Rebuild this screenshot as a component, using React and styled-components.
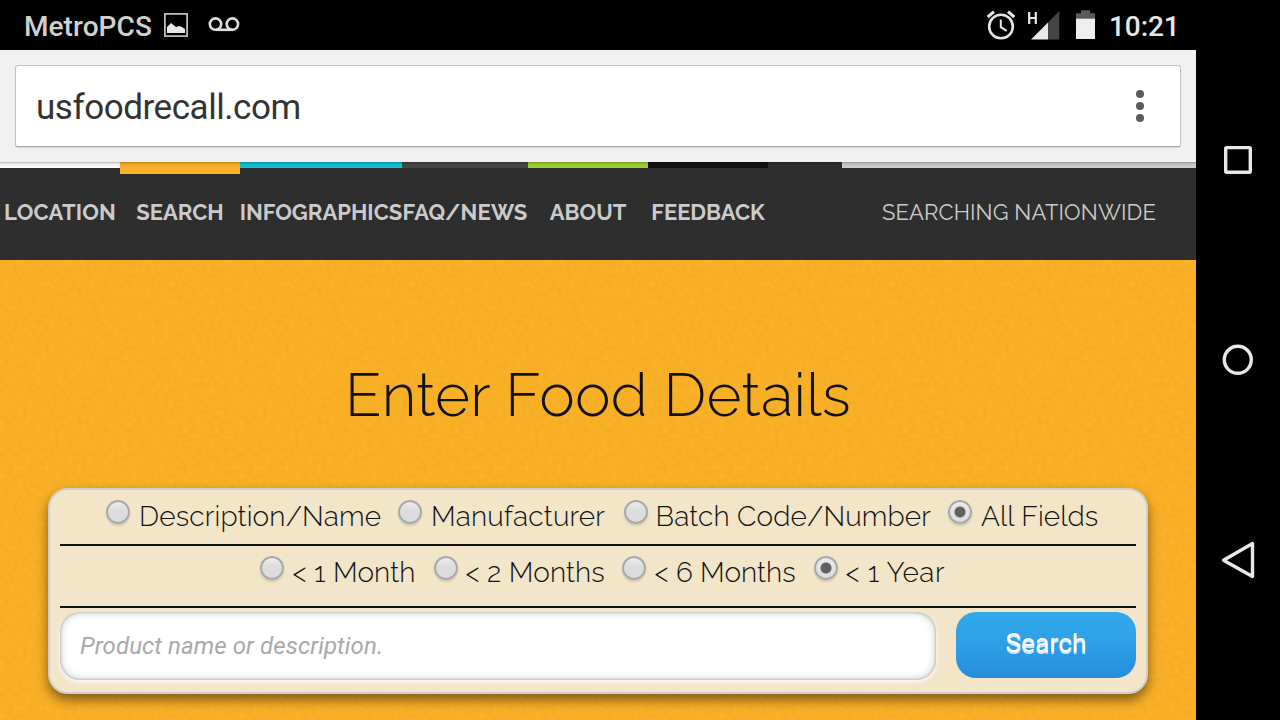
import React from "react";
import styled, { createGlobalStyle, css } from "styled-components";

const GlobalStyle = createGlobalStyle`
  *, *::before, *::after { box-sizing: border-box; }
  html, body { margin: 0; padding: 0; background: #000; overflow: hidden; }
`;

const raleway = `Raleway, Lato, "Open Sans", sans-serif`;
const roboto = `Roboto, "Noto Sans", sans-serif`;

const paper = `url("data:image/svg+xml,%3Csvg xmlns='http://www.w3.org/2000/svg' width='240' height='240'%3E%3Cfilter id='n'%3E%3CfeTurbulence type='fractalNoise' baseFrequency='0.22' numOctaves='3' stitchTiles='stitch'/%3E%3CfeColorMatrix values='0 0 0 0 0.45 0 0 0 0 0.25 0 0 0 0 0 0.2 0 0 0 -0.055'/%3E%3C/filter%3E%3Crect width='240' height='240' filter='url(%23n)'/%3E%3C/svg%3E")`;

const Device = styled.div`
  display: flex;
  width: 1280px;
  height: 720px;
  background: #000;
  overflow: hidden;
`;

const Screen = styled.div`
  display: flex;
  flex-direction: column;
  width: 1196px;
  height: 720px;
`;

const StatusBar = styled.header`
  display: flex;
  align-items: center;
  flex: 0 0 50px;
  height: 50px;
  padding: 0 8px 0 24px;
  color: #e6e6e6;
  font: 500 28px/46px ${roboto};
  background: #000;
`;

const Carrier = styled.span`
  flex: none;
  width: 139px;
  padding-top: 4px;
  color: #d0d0d0;
  letter-spacing: 0.07px;
  white-space: nowrap;
`;

const Clock = styled.span`
  flex: none;
  width: 70px;
  padding-top: 4px;
  letter-spacing: -0.1px;
  white-space: nowrap;
`;

const StatusIcon = styled.svg`
  display: block;
  flex: none;
  margin-left: ${(p) => p.$before || 0}px;
  margin-right: ${(p) => p.$after || 0}px;
`;

const Toolbar = styled.div`
  flex: 0 0 112px;
  padding: 15px 15px 0;
  background: #f1f1f1;
`;

const UrlBox = styled.div`
  display: flex;
  justify-content: space-between;
  align-items: center;
  height: 82px;
  padding: 2px 36px 0 20px;
  border: 1px solid #c2c2c2;
  border-bottom-color: #a9a9a9;
  border-radius: 3px;
  background: #fff;
  box-shadow: 0 1px 1px rgba(0, 0, 0, 0.12);
  color: #333;
  font: 400 35px/80px ${roboto};
  letter-spacing: -0.45px;
`;

const Url = styled.span`
  padding-top: 2px;
`;

const Menu = styled.div`
  display: flex;
  flex-direction: column;
  gap: 4px;
  padding-bottom: 2px;
`;

const Dot = styled.i`
  width: 8px;
  height: 8px;
  border-radius: 50%;
  background: #5b5b5b;
`;

const Nav = styled.nav`
  position: relative;
  display: flex;
  flex: 0 0 98px;
  background: #2e2e2e;
  color: #cbcbcb;
  font: 700 22px/88px ${raleway};

  &::before {
    content: "";
    position: absolute;
    inset: 0 0 auto;
    height: 6px;
    background: linear-gradient(rgba(0, 0, 0, 0.28), rgba(0, 0, 0, 0.06) 35%, rgba(0, 0, 0, 0) 100%);
  }
`;

const NavItem = styled.a`
  display: flex;
  justify-content: center;
  width: ${(p) => p.$width}px;
  height: 98px;
  padding-top: ${(p) => (p.$active ? 0 : 6)}px;
  border-top: ${(p) => (p.$active ? 12 : 6)}px solid ${(p) => p.$color};
  line-height: 77px;
  letter-spacing: ${(p) => p.$spacing || 0}px;
  white-space: nowrap;
`;

const NavNote = styled.span`
  flex: 1;
  padding: 6px 40px 0 0;
  border-top: 6px solid #cecece;
  text-align: right;
  font-weight: 400;
  line-height: 77px;
  letter-spacing: 0.13px;
`;

const Main = styled.main`
  flex: 1;
  padding: 93px 48px 0;
  background: ${paper}, #fbb128;
`;

const Title = styled.h1`
  height: 135px;
  margin: 0;
  color: #111;
  text-align: center;
  font: 300 60px/84px ${raleway};
  letter-spacing: 0.25px;
`;

const Form = styled.form`
  height: 206px;
  padding: 0 10px;
  border: 2px solid #cfcfcf;
  border-radius: 20px;
  background: #f3e5c8;
  box-shadow: 0 6px 12px rgba(0, 0, 0, 0.48);
`;

const OptionRow = styled.div`
  display: flex;
  height: ${(p) => p.$height}px;
  padding: 10px 0 0 ${(p) => p.$indent}px;
  border-bottom: 2px solid #111;
`;

const Option = styled.label`
  display: flex;
  flex: none;
  gap: ${(p) => p.$gap}px;
  width: ${(p) => p.$width}px;
  color: #111;
  font: 360 28px/34px ${raleway};
  letter-spacing: ${(p) => p.$spacing || 0}px;
  white-space: nowrap;
`;

const Radio = styled.input`
  appearance: none;
  flex: none;
  width: 24px;
  height: 24px;
  margin: 0;
  border: 2px solid #a9a9a9;
  border-radius: 50%;
  background: linear-gradient(#ebebeb, #dcdcdc 45%, #dcdcdc);
  box-shadow: 0 2px 2px rgba(0, 0, 0, 0.13);

  &:checked {
    background: radial-gradient(circle at 10px 10px, #616161 5px, transparent 6px),
      linear-gradient(#ebebeb, #dcdcdc);
  }
`;

const SearchRow = styled.div`
  display: flex;
  gap: 20px;
  padding-top: 4px;
`;

const field = css`
  border: 0;
  border-radius: 20px;
  font-family: ${roboto};
`;

const TextField = styled.input`
  ${field}
  width: 876px;
  height: 68px;
  padding: 0 20px;
  background: #fff;
  box-shadow: inset 0 0 3px rgba(0, 0, 0, 0.3), inset 0 0 10px rgba(0, 0, 0, 0.22),
    0 2px 4px rgba(255, 255, 255, 0.9);
  font-size: 24px;
  letter-spacing: 0.1px;

  &::placeholder {
    color: #a9a9a9;
    font-style: italic;
    opacity: 1;
  }
`;

const SearchButton = styled.button`
  ${field}
  width: 180px;
  height: 66px;
  padding: 0 0 4px;
  background: linear-gradient(#33a9ed, #2e9fe6 50%, #258ddc);
  color: #fff;
  font-size: 26.4px;
  font-weight: 400;
  text-shadow: 0 2px 0 rgba(255, 255, 255, 0.75);
`;

const SystemKeys = styled.aside`
  display: flex;
  flex-direction: column;
  align-items: center;
  width: 84px;
  padding-top: 140px;
  gap: 160px;
`;

const KeyIcon = styled.svg`
  display: block;
  fill: none;
  stroke: #e8e8e8;
  stroke-width: 3.4;
  stroke-linejoin: round;
`;

const tabs = [
  { text: "LOCATION", width: 120, color: "#ffffff", spacing: 0.15 },
  { text: "SEARCH", width: 120, color: "#fbb128", active: true },
  { text: "INFOGRAPHICS", width: 162, color: "#10c3d8" },
  { text: "FAQ/NEWS", width: 126, color: "#464646", spacing: 0.15 },
  { text: "ABOUT", width: 120, color: "#9fd42f" },
  { text: "FEEDBACK", width: 120, color: "#111" },
];

const fieldOptions = [
  { text: "Description/Name", width: 292, gap: 9, spacing: 0.18 },
  { text: "Manufacturer", width: 226, gap: 9, spacing: 0.22 },
  { text: "Batch Code/Number", width: 324, gap: 7.5, spacing: 0.14 },
  { text: "All Fields", width: 160, gap: 9, spacing: 0.1, checked: true },
];

const ageOptions = [
  { text: "< 1 Month", width: 174, gap: 8.5, spacing: 0.1 },
  { text: "< 2 Months", width: 188, gap: 7.5, spacing: 0.1 },
  { text: "< 6 Months", width: 192, gap: 8.5, spacing: 0.03 },
  { text: "< 1 Year", width: 140, gap: 7.5, spacing: 0.5, checked: true },
];

export default function App() {
  return (
    <Device>
      <GlobalStyle />
      <Screen>
        <StatusBar>
          <Carrier>MetroPCS</Carrier>
          <StatusIcon width="26" height="26" viewBox="0 0 26 26">
            <rect x="1.9" y="1.9" width="22.2" height="22.2" fill="none" stroke="#cfcfcf" strokeWidth="1.6" />
            <path d="M4 21v-6l4-4 5 4 3-1 3 1 3 2v4z" fill="#e8e8e8" />
          </StatusIcon>
          <StatusIcon $before={19} $after={746} width="32" height="16" viewBox="0 0 32 16" fill="none" stroke="#dedede" strokeWidth="2.6">
            <circle cx="7.5" cy="7.1" r="5.7" />
            <circle cx="24.4" cy="7.1" r="5.7" />
            <path d="M8 12.800h17" />
          </StatusIcon>
          <StatusIcon width="30" height="30" viewBox="0 0 30 30" fill="none" stroke="#e6e6e6" strokeWidth="2.6">
            <circle cx="15" cy="16.500" r="11.8" />
            <path d="M1.7 7 8 1.7M28.3 7 22 1.7" strokeWidth="3" />
            <path d="M14.8 9.500v7.7l6 3.7" strokeWidth="2" />
          </StatusIcon>
          <StatusIcon $before={12} width="34" height="30" viewBox="0 0 34 30">
            <path d="M1.2 2v12M7.8 2v12M1 8h7" fill="none" stroke="#e6e6e6" strokeWidth="2.2" />
            <path d="M31.300 1v28.500H20v-17z" fill="#444" />
            <path d="M20 12.500v17H3z" fill="#e8e8e8" />
          </StatusIcon>
          <StatusIcon $before={14} $after={13} width="20" height="30" viewBox="0 0 20 30">
            <path d="M5 0.300h9v3h5v6H0v-6h5z" fill="#5a5a5a" />
            <path d="M0 8.700h19v20.300H0z" fill="#eee" />
          </StatusIcon>
          <Clock>10:21</Clock>
        </StatusBar>
        <Toolbar>
          <UrlBox>
            <Url>usfoodrecall.com</Url>
            <Menu>
              <Dot />
              <Dot />
              <Dot />
            </Menu>
          </UrlBox>
        </Toolbar>
        <Nav>
          {tabs.map((t) => (
            <NavItem key={t.text} $width={t.width} $color={t.color} $active={t.active} $spacing={t.spacing}>
              {t.text}
            </NavItem>
          ))}
          <NavItem as="span" $width={74} $color="#2e2e2e" />
          <NavNote>SEARCHING NATIONWIDE</NavNote>
        </Nav>
        <Main>
          <Title>Enter Food Details</Title>
          <Form>
            <OptionRow $height={56} $indent={46}>
              {fieldOptions.map((o) => (
                <Option key={o.text} $width={o.width} $gap={o.gap} $spacing={o.spacing}>
                  <Radio type="radio" name="field" defaultChecked={o.checked} />
                  <span>{o.text}</span>
                </Option>
              ))}
            </OptionRow>
            <OptionRow $height={62} $indent={200}>
              {ageOptions.map((o) => (
                <Option key={o.text} $width={o.width} $gap={o.gap} $spacing={o.spacing}>
                  <Radio type="radio" name="age" defaultChecked={o.checked} />
                  <span>{o.text}</span>
                </Option>
              ))}
            </OptionRow>
            <SearchRow>
              <TextField placeholder="Product name or description." />
              <SearchButton type="button">Search</SearchButton>
            </SearchRow>
          </Form>
        </Main>
      </Screen>
      <SystemKeys>
        <KeyIcon width="40" height="40" viewBox="0 0 40 40">
          <rect x="7.700" y="7.600" width="24.600" height="24.600" rx="1" />
        </KeyIcon>
        <KeyIcon width="40" height="40" viewBox="0 0 40 40">
          <circle cx="19.800" cy="19.800" r="13.500" />
        </KeyIcon>
        <KeyIcon width="40" height="40" viewBox="0 0 40 40">
          <path d="M34.500 3.500v33L5.500 20.300z" />
        </KeyIcon>
      </SystemKeys>
    </Device>
  );
}
